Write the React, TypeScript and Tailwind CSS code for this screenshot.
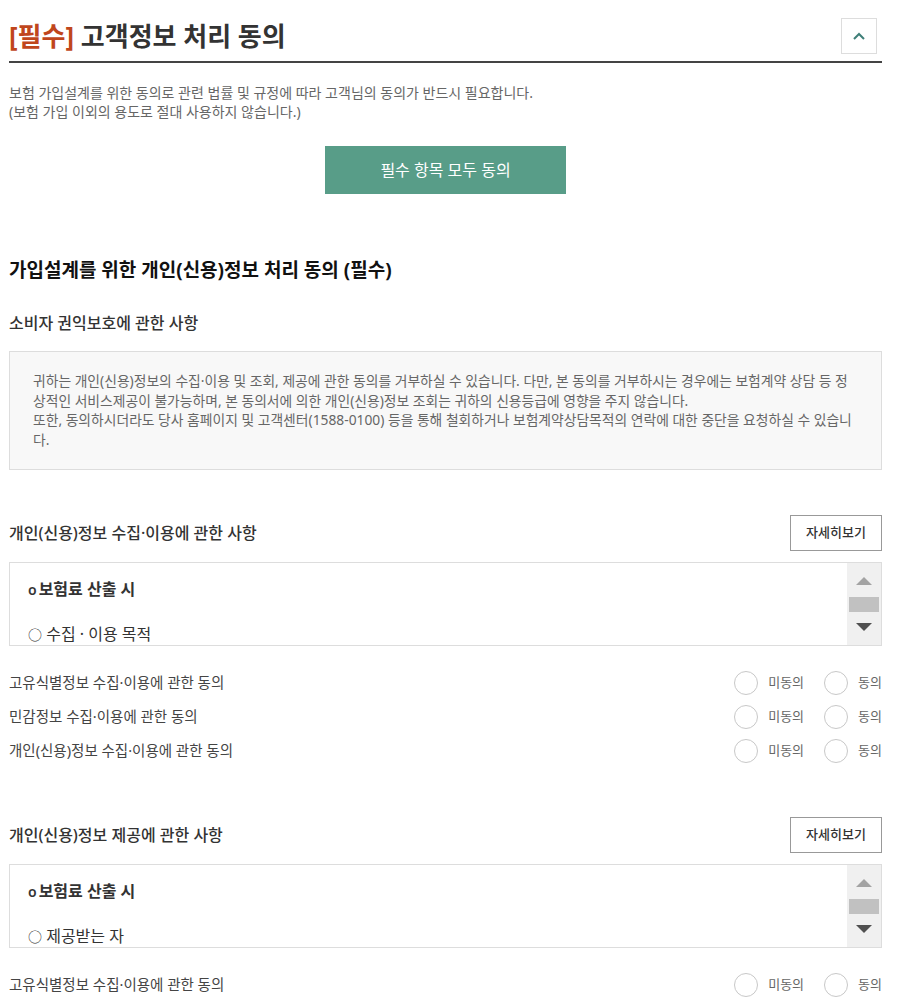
import React from 'react'

const consentRows1 = [
  '고유식별정보 수집·이용에 관한 동의',
  '민감정보 수집·이용에 관한 동의',
  '개인(신용)정보 수집·이용에 관한 동의',
]

const consentRows2 = ['고유식별정보 수집·이용에 관한 동의']

function Radio({ label }: { label: string }) {
  return (
    <label className="flex items-center">
      <span className="w-[24px] h-[24px] rounded-full border border-[#c8c8c8] bg-white" />
      <span className="ml-[10px] text-[13px] text-[#666]">{label}</span>
    </label>
  )
}

function ConsentRow({ label }: { label: string }) {
  return (
    <div className="h-[34px] flex items-center justify-between">
      <span className="text-[14.5px] text-[#444]">{label}</span>
      <div className="flex items-center gap-[20px]">
        <Radio label="미동의" />
        <Radio label="동의" />
      </div>
    </div>
  )
}

function ScrollBox({ second }: { second: string }) {
  return (
    <div className="mt-[11px] h-[84px] border border-[#ddd] flex">
      <div className="flex-1 overflow-hidden pl-[18px] pt-[15px]">
        <p className="text-[16px] leading-[22px] font-bold text-[#333]">
          <span className="mr-[2px] text-[14px] font-semibold">o</span>보험료 산출 시
        </p>
        <p className="mt-[22px] text-[16px] leading-[22px] text-[#333]">
          <span className="text-[14px]">○</span> {second}
        </p>
      </div>
      <div className="w-[34px] bg-[#f0f0f0] flex flex-col items-center pt-[14px]">
        <span className="w-0 h-0 border-x-8 border-x-transparent border-b-8 border-b-[#a3a3a3]" />
        <span className="mt-[12px] w-[30px] h-[15px] bg-[#c1c1c1]" />
        <span className="mt-[11px] w-0 h-0 border-x-8 border-x-transparent border-t-8 border-t-[#505050]" />
      </div>
    </div>
  )
}

function Section({ title, second, rows, top }: { title: string; second: string; rows: string[]; top: string }) {
  return (
    <div className={top}>
      <div className="flex items-center justify-between h-[36px]">
        <h3 className="text-[16px] font-medium text-[#333]">{title}</h3>
        <button className="w-[92px] h-[36px] border border-[#999] bg-white text-[13px] font-medium text-[#333]">
          자세히보기
        </button>
      </div>
      <ScrollBox second={second} />
      <div className="mt-[20px]">
        {rows.map(r => (
          <ConsentRow key={r} label={r} />
        ))}
      </div>
    </div>
  )
}

export default function App() {
  return (
    <div className="min-h-[1008px] bg-white pl-[9px] pr-[18px] font-['Noto_Sans','Noto_Sans_CJK_KR',sans-serif]">
      {/* header */}
      <div className="pt-[18px] pb-[7px] border-b-2 border-[#444] flex items-center justify-between">
        <h1 className="text-[26px] leading-[36px] font-bold text-[#333]">
          <span className="text-[#c0461c]">[필수]</span> 고객정보 처리 동의
        </h1>
        <button className="mr-[5px] w-[36px] h-[36px] border border-[#ddd] bg-white flex items-center justify-center">
          <svg width="12" height="8" viewBox="0 0 12 8">
            <polyline points="1,7 6,2 11,7" fill="none" stroke="#3f7f78" strokeWidth="2" />
          </svg>
        </button>
      </div>

      <div className="mt-[20px] text-[14px] leading-[19px] text-[#666]">
        <p>보험 가입설계를 위한 동의로 관련 법률 및 규정에 따라 고객님의 동의가 반드시 필요합니다.</p>
        <p>(보험 가입 이외의 용도로 절대 사용하지 않습니다.)</p>
      </div>

      <button className="mt-[25px] mx-auto block w-[241px] h-[48px] bg-[#589d88] text-white text-[16px]">
        필수 항목 모두 동의
      </button>

      <h2 className="mt-[64px] text-[19px] leading-[24px] font-bold text-[#111]">
        가입설계를 위한 개인(신용)정보 처리 동의 (필수)
      </h2>

      <h3 className="mt-[30px] text-[16px] leading-[22px] font-medium text-[#333]">소비자 권익보호에 관한 사항</h3>

      <div className="mt-[17px] border border-[#ddd] bg-[#f8f8f8] pt-[19px] pb-[20px] px-[23px] text-[13.8px] leading-[19.5px] text-[#666] whitespace-nowrap">
        <p>귀하는 개인(신용)정보의 수집·이용 및 조회, 제공에 관한 동의를 거부하실 수 있습니다. 다만, 본 동의를 거부하시는 경우에는 보험계약 상담 등 정</p>
        <p>상적인 서비스제공이 불가능하며, 본 동의서에 의한 개인(신용)정보 조회는 귀하의 신용등급에 영향을 주지 않습니다.</p>
        <p>또한, 동의하시더라도 당사 홈페이지 및 고객센터(1588-0100) 등을 통해 철회하거나 보험계약상담목적의 연락에 대한 중단을 요청하실 수 있습니</p>
        <p>다.</p>
      </div>

      <Section top="mt-[45px]" title="개인(신용)정보 수집·이용에 관한 사항" second="수집 · 이용 목적" rows={consentRows1} />
      <Section top="mt-[49px]" title="개인(신용)정보 제공에 관한 사항" second="제공받는 자" rows={consentRows2} />
    </div>
  )
}
